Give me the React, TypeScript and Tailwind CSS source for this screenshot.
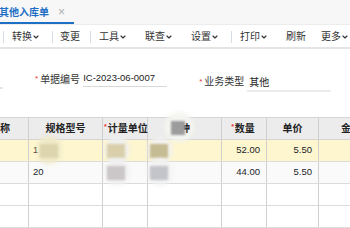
import { ChevronDown } from 'lucide-react'

const FONT = { fontFamily: '"Liberation Sans", "Noto Sans CJK SC", sans-serif' }

function Sep({ className }: { className: string }) {
  return <span className={'h-[12px] w-px shrink-0 bg-[#d6dce6] ' + className} />
}

function Tool({ label, menu, className = '' }: { label: string; menu?: boolean; className?: string }) {
  return (
    <span className={'flex shrink-0 items-center text-[10px] text-[#333] ' + className}>
      {label}
      {menu && <ChevronDown className="ml-[0px] h-[8px] w-[8px]" strokeWidth={3.5} />}
    </span>
  )
}

function Blob({ className }: { className: string }) {
  return <span className={'absolute rounded-full blur-[2px] ' + className} />
}

const COLS = [
  'w-[29px] shrink-0',
  'w-[74px] shrink-0',
  'w-[45px] shrink-0',
  'w-[74px] shrink-0',
  'w-[45px] shrink-0',
  'w-[52px] shrink-0',
  'w-[31px] shrink-0',
]

const ROWS = [
  { bg: 'bg-[#fdf6cf]', spec: '1', qty: '52.00', price: '5.50', c1: 'bg-[#d9cfab]', c2: 'bg-[#c6bc93]' },
  { bg: 'bg-[#fafafa]', spec: '20', qty: '44.00', price: '5.50', c1: 'bg-[#cbc6c7]', c2: 'bg-[#c4c5cb]' },
  { bg: 'bg-white', spec: '', qty: '', price: '' },
  { bg: 'bg-white', spec: '', qty: '', price: '' },
]

export default function App() {
  return (
    <div className="h-[228px] w-[350px] overflow-hidden whitespace-nowrap bg-white" style={FONT}>
      {/* Tabs */}
      <div className="flex h-[25px] items-start border-b border-[#ececec] bg-[#f7f7f7]">
        <div className="flex h-[24px] w-[74px] shrink-0 items-center border-b-2 border-[#1f6fc5] pt-[2px]">
          <span className="ml-[-1px] text-[10px] font-bold text-[#1f6fc5]">其他入库单</span>
          <span className="ml-[9px] text-[12px] leading-none text-[#b0b0b0]">×</span>
        </div>
      </div>

      {/* Toolbar */}
      <div className="flex h-[24px] items-center border-b-2 border-[#e4e4e4] pt-[1px]">
        <Sep className="ml-[3px]" />
        <Tool label="转换" menu className="ml-[8px]" />
        <Sep className="ml-[12px]" />
        <Tool label="变更" className="ml-[7px]" />
        <Sep className="ml-[10px]" />
        <Tool label="工具" menu className="ml-[8px]" />
        <Tool label="联查" menu className="ml-[18px]" />
        <Tool label="设置" menu className="ml-[18px]" />
        <Sep className="ml-[12px]" />
        <Tool label="打印" menu className="ml-[8px]" />
        <Tool label="刷新" className="ml-[18px]" />
        <Tool label="更多" menu className="ml-[15px]" />
      </div>

      {/* Form */}
      <div className="relative flex h-[68px] items-start pt-[22px]">
        <span className="absolute left-0 top-[38px] h-[2px] w-[3px] bg-[#e4e4e4]" />
        <div className="ml-[35px] flex shrink-0 items-center">
          <span className="mr-[2px] text-[8px] text-[#e33]">*</span>
          <span className="text-[10px] text-[#333]">单据编号</span>
          <span className="ml-[3px] w-[84px] border-b border-[#d8d8d8] pb-[1px] text-[9.5px] text-[#222]">
            IC-2023-06-0007
          </span>
        </div>
        <div className="ml-[32px] flex shrink-0 items-center">
          <span className="mr-[2px] text-[8px] text-[#e33]">*</span>
          <span className="text-[10px] text-[#333]">业务类型</span>
          <span className="ml-[3px] w-[84px] border-b-2 border-[#ececec] pb-[0px] pl-[2px] pt-[4px] text-[10px] text-[#222]">
            其他
          </span>
        </div>
      </div>

      {/* Grid */}
      <div className="border-t border-[#d4d4d4]">
        <div className="flex h-[22px] border-b border-[#d4d4d4] bg-[#ececec] text-[10px] font-bold text-[#222]">
          <div className={COLS[0] + ' flex items-center border-r border-[#d0d0d0]'}>称</div>
          <div className={COLS[1] + ' flex items-center justify-center border-r border-[#d0d0d0]'}>规格型号</div>
          <div className={COLS[2] + ' flex items-center border-r border-[#d0d0d0] pl-[1px]'}>
            <span className="mr-[1px] self-start pt-[4px] text-[7px] text-[#e33]">*</span>计量单位
          </div>
          <div className={COLS[3] + ' relative flex items-center border-r border-[#d0d0d0]'}>
            <Blob className="left-[16px] top-[-6px] h-[30px] w-[30px] bg-[#f4f4f0]" />
            <span className="relative ml-[32px]">种</span>
            <span className="absolute left-[23px] top-[3px] h-[14px] w-[14px] bg-[#9c9c9c] blur-[1px]" />
          </div>
          <div className={COLS[4] + ' flex items-center justify-center border-r border-[#d0d0d0] pr-[2px]'}>
            <span className="mr-[1px] self-start pt-[4px] text-[7px] text-[#e33]">*</span>数量
          </div>
          <div className={COLS[5] + ' flex items-center justify-center border-r border-[#d0d0d0]'}>单价</div>
          <div className={COLS[6] + ' flex items-center pl-[22px]'}>金</div>
        </div>

        {ROWS.map((r, i) => (
          <div key={i} className={'flex h-[22px] border-b border-[#dcdcdc] text-[9.5px] text-[#1c1c2a] ' + r.bg}>
            <div className={COLS[0] + ' border-r border-[#d0d0d0]'} />
            <div className={COLS[1] + ' relative flex items-center border-r border-[#d0d0d0] pl-[4px]'}>
              {r.spec}
              {i === 0 && (
                <>
                  <Blob className="left-[8px] top-[-4px] h-[28px] w-[24px] bg-[#efe9c9]" />
                  <span className="absolute left-[11px] top-[4px] h-[14px] w-[18px] bg-[#ddd5ae] blur-[1px]" />
                </>
              )}
            </div>
            <div className={COLS[2] + ' relative border-r border-[#d0d0d0]'}>
              {r.c1 && (
                <>
                  <Blob className="left-[2px] top-[-3px] h-[26px] w-[24px] bg-[#efefef]" />
                  <span className={'absolute left-[4px] top-[4px] h-[14px] w-[18px] blur-[1px] ' + r.c1} />
                </>
              )}
            </div>
            <div className={COLS[3] + ' relative border-r border-[#d0d0d0]'}>
              {r.c2 && (
                <>
                  <Blob className="left-[0px] top-[-3px] h-[26px] w-[24px] bg-[#f1f1f1]" />
                  <span className={'absolute left-[2px] top-[4px] h-[14px] w-[18px] blur-[1px] ' + r.c2} />
                </>
              )}
            </div>
            <div className={COLS[4] + ' flex items-center justify-end border-r border-[#d0d0d0] pr-[6px]'}>{r.qty}</div>
            <div className={COLS[5] + ' flex items-center justify-end border-r border-[#d0d0d0] pr-[6px]'}>{r.price}</div>
            <div className={COLS[6]} />
          </div>
        ))}
      </div>
    </div>
  )
}
